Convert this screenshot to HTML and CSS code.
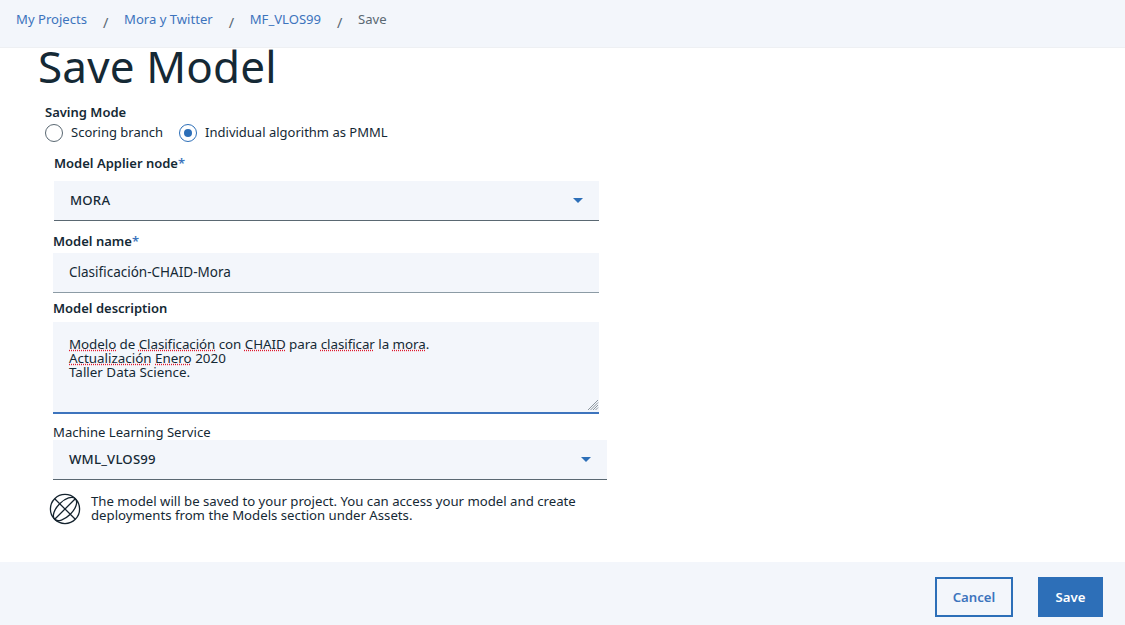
FILE: index.html
```html
<!DOCTYPE html>
<html lang="en">
<head>
<meta charset="utf-8">
<title>Save Model</title>
<link rel="stylesheet" href="styles.css">
</head>
<body>
<div class="page">
  <nav class="crumbs">
    <a class="crumb">My Projects</a><span class="sep">/</span>
    <a class="crumb">Mora y Twitter</a><span class="sep">/</span>
    <a class="crumb">MF_VLOS99</a><span class="sep">/</span>
    <span class="crumb-current">Save</span>
  </nav>
  <main class="main">
    <h1 class="title">Save Model</h1>
    <div class="mode">
      <div class="label">Saving Mode</div>
      <div class="radios">
        <span class="radio"></span><span class="radio-text first">Scoring branch</span>
        <span class="radio checked"></span><span class="radio-text">Individual algorithm as PMML</span>
      </div>
    </div>
    <div class="field applier">
      <div class="label">Model Applier node<span class="req">*</span></div>
      <div class="select tall"><span class="select-value">MORA</span><span class="caret"></span></div>
    </div>
    <div class="field name">
      <div class="label">Model name<span class="req">*</span></div>
      <div class="input">Clasificación-CHAID-Mora</div>
    </div>
    <div class="field desc">
      <div class="label">Model description</div>
      <div class="textarea">
        <div class="line tight"><span class="sp">Modelo</span> de <span class="sp">Clasificación</span> con <span class="sp">CHAID</span> para <span class="sp">clasificar</span> la <span class="sp">mora</span>.</div>
        <div class="line"><span class="sp">Actualización</span> <span class="sp">Enero</span> 2020</div>
        <div class="line">Taller Data Science.</div>
        <svg class="grip" width="12" height="12" viewBox="0 0 12 12"><path d="M1 11 11 1M3.500 11 11 3.500M6 11l5-5M8.500 11 11 8.500" stroke="#7f8a92" stroke-width="0.9" fill="none"/></svg>
      </div>
    </div>
    <div class="field service">
      <div class="label-plain">Machine Learning Service</div>
      <div class="select wide"><span class="select-value">WML_VLOS99</span><span class="caret"></span></div>
    </div>
    <div class="note">
      <svg class="globe" width="32" height="32" viewBox="0 0 32 32" fill="none" stroke="#14232e" stroke-width="1.300"><circle cx="16" cy="16" r="14.600"/><path d="M5.700 5.700 26.300 26.300M26.300 5.700 5.700 26.300"/><ellipse cx="16" cy="16" rx="14.600" ry="7.500" transform="rotate(-45 16 16)"/></svg>
      <p class="note-text">The model will be saved to your project. You can access your model and create deployments from the Models section under Assets.</p>
    </div>
  </main>
  <footer class="footer">
    <button class="btn secondary">Cancel</button>
    <button class="btn primary">Save</button>
  </footer>
</div>
</body>
</html>
```
FILE: styles.css
```css
* { box-sizing: border-box; }
html, body { margin: 0; height: 100%; }
body { background: #fff; color: #152935; font-family: "Noto Sans", "Open Sans", sans-serif; font-size: 13px; overflow: hidden; }
.page { width: 1125px; height: 625px; display: flex; flex-direction: column; }
.crumbs { height: 48px; flex: none; background: #f3f6fb; border-bottom: 1px solid #eef0f3; display: flex; align-items: flex-start; padding: 10px 0 0 16px; font-size: 13.1px; line-height: 18px; }
.crumb { color: #3d74bd; }
.crumb-current { color: #5a6872; }
.sep { color: #5a6872; margin: 3px 16px 0 16px; font-size: 14.5px; width: 5px; }
.main { flex: 1; display: flex; flex-direction: column; align-items: flex-start; }
.title { margin: 0 0 0 38px; font-size: 44px; font-weight: 400; line-height: 36px; height: 47px; padding-top: 0; letter-spacing: 0.15px; color: #152935; font-family: "Noto Sans", sans-serif; }
.label { font-weight: 600; font-size: 13px; line-height: 18px; color: #152935; white-space: nowrap; }
.label-plain { font-size: 13.1px; line-height: 16px; color: #152935; }
.req { color: #3d74bd; }
.mode { margin: 8px 0 0 45px; }
.radios { display: flex; align-items: center; margin-top: 2px; height: 20px; }
.radio { width: 18px; height: 18px; border: 1.5px solid #5a6872; border-radius: 50%; flex: none; margin-right: 8px; position: relative; }
.radio.checked { border-color: #2d6fb8; display: flex; align-items: center; justify-content: center; }
.radio.checked::after { content: ""; width: 8px; height: 8px; border-radius: 50%; background: #2d6fb8; }
.radio-text { font-size: 13px; white-space: nowrap; margin-bottom: 2px; }
.radio-text.first { margin-right: 16px; }
.field { display: flex; flex-direction: column; }
.applier { margin: 11px 0 0 54px; }
.select { background: #f3f6fb; display: flex; align-items: center; justify-content: space-between; }
.select.tall { width: 545px; height: 40px; margin-top: 9px; border-bottom: 1px solid #5a6872; padding: 0 16px; }
.select.wide { width: 554px; height: 40px; border-bottom: 1px solid #5a6872; padding: 0 16px; }
.select-value { font-size: 13.2px; font-weight: 500; letter-spacing: 0.2px; margin-bottom: 2px; }
.caret { width: 0; height: 0; border-left: 5px solid transparent; border-right: 5px solid transparent; border-top: 5px solid #2d6fb8; }
.name { margin: 11px 0 0 53px; }
.input { width: 546px; height: 40px; margin-top: 3px; background: #f3f6fb; border-bottom: 1px solid #8c9ba5; padding: 0 16px 2px; display: flex; align-items: center; font-size: 13.5px; }
.desc { margin: 6px 0 0 53px; }
.textarea { position: relative; width: 546px; height: 92px; margin-top: 5px; background: #f3f6fb; border-bottom: 2px solid #3d74bd; padding: 15px 16px 0; font-size: 13.4px; line-height: 14px; }
.tight { letter-spacing: -0.07px; }
.sp { text-decoration: underline dotted #e0182d; text-underline-offset: 1px; }
.grip { position: absolute; right: 0; bottom: 1px; }
.service { margin: 10px 0 0 53px; }
.note { display: flex; align-items: center; margin: 13px 0 0 49px; }
.globe { flex: none; }
.note-text { margin: 0 0 2px 10px; width: 510px; font-size: 13.2px; line-height: 14.5px; }
.footer { height: 63px; flex: none; background: #f3f6fb; display: flex; align-items: flex-start; justify-content: flex-end; padding: 15px 22px 0 0; gap: 25px; }
.btn { height: 40px; font-family: inherit; font-size: 13.2px; font-weight: 600; padding: 0; }
.secondary { width: 78px; background: transparent; border: 2px solid #2d6fb8; color: #3d74bd; }
.primary { width: 65px; background: #2d6fb8; border: 0; color: #fff; }
```
